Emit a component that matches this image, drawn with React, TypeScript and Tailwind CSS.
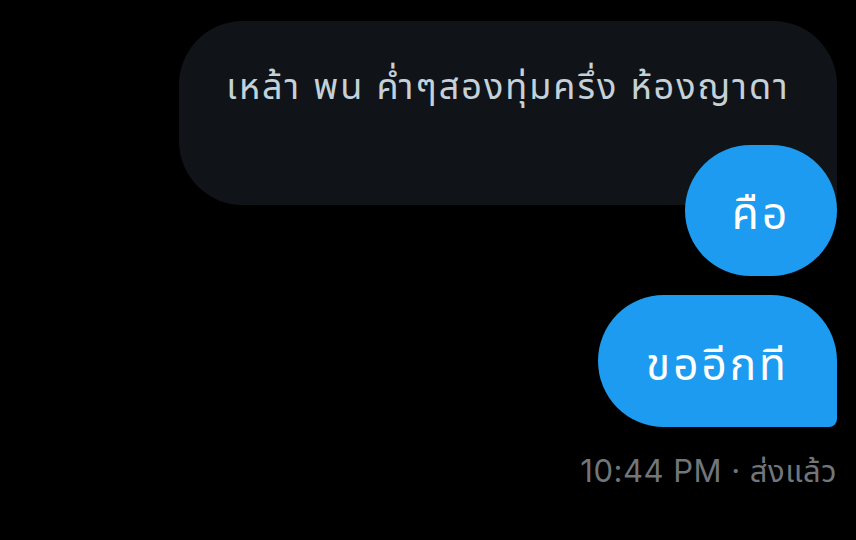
export default function App() {
  return (
    <div
      className="w-[856px] h-[540px] bg-black overflow-hidden flex flex-col items-end pt-[21px] pr-[19px]"
      style={{ fontFamily: 'Inter, "Noto Sans", "Noto Sans Thai", sans-serif' }}
    >
      {/* incoming message */}
      <div className="w-[658px] h-[184px] bg-[#101418] rounded-t-[64px] rounded-bl-[64px] flex justify-center pt-[44px]">
        <span className="text-[36px] leading-[42px] tracking-[2px] text-[#c5d1d9] whitespace-nowrap">
          เหล้า พน ค่ำๆสองทุ่มครึ่ง ห้องญาดา
        </span>
      </div>

      {/* outgoing messages */}
      <div className="-mt-[60px] w-[152px] h-[131px] rounded-[66px] bg-[#1d9bf0] flex items-center justify-center pt-[5px] relative">
        <span className="text-[44px] leading-none tracking-[3px] text-white">คือ</span>
      </div>

      <div className="mt-[19px] w-[239px] h-[132px] bg-[#1d9bf0] rounded-t-[66px] rounded-bl-[66px] rounded-br-[8px] flex items-center justify-center pt-[6px]">
        <span className="text-[44px] leading-none tracking-[3px] text-white">ขออีกที</span>
      </div>

      <div className="mt-[26px] text-[31px] leading-[36px] tracking-[0.5px] text-[#71767b] whitespace-nowrap">
        10:44 PM · ส่งแล้ว
      </div>
    </div>
  );
}
